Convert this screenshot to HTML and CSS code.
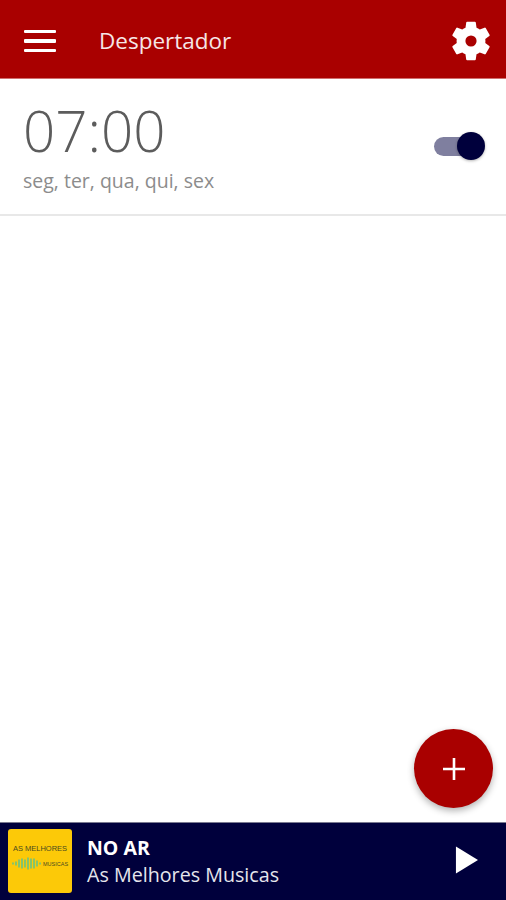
FILE: index.html
```html
<!DOCTYPE html>
<html lang="pt">
<head>
<meta charset="utf-8">
<title>Despertador</title>
<link rel="stylesheet" href="styles.css">
</head>
<body>
<div class="app">
  <header class="topbar">
    <div class="menu-icon"><span></span><span></span><span></span></div>
    <h1 class="title">Despertador</h1>
    <svg class="gear" viewBox="0 0 24 24" width="48" height="48"><path fill="#fff" fill-rule="evenodd" d="M19.14 12.94c.04-.3.06-.61.06-.94 0-.32-.02-.64-.07-.94l2.03-1.58a.49.49 0 0 0 .12-.61l-1.92-3.32a.49.49 0 0 0-.59-.22l-2.39.96c-.5-.38-1.03-.7-1.62-.94l-.36-2.54a.48.48 0 0 0-.48-.41h-3.84a.48.48 0 0 0-.47.41l-.36 2.54c-.59.24-1.13.57-1.62.94l-2.39-.96a.48.48 0 0 0-.59.22L2.74 8.87a.48.48 0 0 0 .12.61l2.03 1.58c-.05.3-.09.63-.09.94s.02.64.07.94l-2.03 1.58a.49.49 0 0 0-.12.61l1.92 3.32c.12.22.37.29.59.22l2.39-.96c.5.38 1.03.7 1.62.94l.36 2.54c.05.24.24.41.48.41h3.84c.24 0 .44-.17.47-.41l.36-2.54c.59-.24 1.13-.56 1.62-.94l2.39.96c.22.08.47 0 .59-.22l1.92-3.32a.48.48 0 0 0-.12-.61l-2.01-1.58zM12 14.8a2.8 2.8 0 1 1 0-5.6 2.8 2.8 0 0 1 0 5.6z"/></svg>
  </header>
  <main class="content">
    <section class="alarm">
      <div class="alarm-text">
        <div class="time">07:00</div>
        <div class="days">seg, ter, qua, qui, sex</div>
      </div>
      <div class="switch"><span class="track"></span><span class="thumb"></span></div>
    </section>
    <button class="fab" type="button" aria-label="Adicionar">
      <svg viewBox="0 0 24 24" width="24" height="24"><path fill="none" stroke="#fff" stroke-width="2.6" d="M12 1v22M1 12h22"/></svg>
    </button>
  </main>
  <footer class="player">
    <div class="cover">
      <div class="cover-top">AS MELHORES</div>
      <div class="cover-row">
        <svg viewBox="0 0 30 14" width="30" height="15"><path fill="none" stroke="#86c46a" stroke-width="2" d="M1 6v2M4 5v4M7 3v8M10 2v10M13 3v8M16 1v12M19 2v10M22 2v10M25 4v6M28 6v2"/></svg>
        <span class="cover-sub">MUSICAS</span>
      </div>
    </div>
    <div class="now">
      <div class="now-status">NO AR</div>
      <div class="now-name">As Melhores Musicas</div>
    </div>
    <svg class="play" viewBox="0 0 24 28" width="23" height="28"><path fill="#fff" d="M1 0l23 14L1 28z"/></svg>
  </footer>
</div>
</body>
</html>
```
FILE: styles.css
```css
* { box-sizing: border-box; }
html, body { margin: 0; padding: 0; }
body { font-family: "Open Sans", sans-serif; background: #fff; }
.app { width: 506px; height: 900px; display: flex; flex-direction: column; overflow: hidden; }

.topbar {
  height: 79px; flex: none; display: flex; align-items: center;
  background: #a90000; border-bottom: 1px solid #cf6f6f;
  padding: 4px 11px 0 24px;
}
.menu-icon { width: 32px; display: flex; flex-direction: column; gap: 6px; }
.menu-icon span { display: block; height: 3.6px; background: #fff; border-radius: 1px; }
.title {
  margin: 0 0 0 43px; flex: 1; color: #f6e6e6;
  font-size: 22.5px; font-weight: 400; line-height: 1;
}
.gear { flex: none; }

.content { flex: 1; position: relative; background: #fff; }
.alarm {
  height: 137px; display: flex; align-items: flex-start; justify-content: space-between;
  border-bottom: 2px solid #e8e8e8; padding: 17px 21px 0 23px;
}
.time { font-size: 56.5px; line-height: 70px; color: #5c5c5c; font-weight: 300; }
.days { font-size: 19.5px; line-height: 24px; color: #8c8c8c; margin-top: 3px; }
.switch { position: relative; width: 51px; height: 28px; margin-top: 36px; display: flex; align-items: center; }
.track { display: block; width: 48px; height: 19px; border-radius: 10px; background: #7f7f9f; }
.thumb {
  position: absolute; right: 0; top: 0; width: 28px; height: 28px; border-radius: 50%;
  background: #00003c; box-shadow: 0 1px 3px rgba(0,0,0,.3);
}

.fab {
  position: absolute; right: 13px; bottom: 14px; width: 79px; height: 79px;
  border: 0; border-radius: 50%; padding: 0; background: #a90000;
  display: flex; align-items: center; justify-content: center;
  box-shadow: 0 3px 7px rgba(0,0,0,.3);
}

.player {
  height: 78px; flex: none; display: flex; align-items: center;
  background: #00003c; border-top: 1px solid #7a7a90;
  padding: 0 28px 3px 8px;
}
.cover {
  width: 64px; height: 64px; flex: none; border-radius: 3px; background: #fcc908;
  display: flex; flex-direction: column; padding: 15px 3px 0; color: #4a4a20;
  position: relative; top: 1px;
}
.cover-top { font-family: "Liberation Sans", sans-serif; font-size: 7.5px; line-height: 9px; white-space: nowrap; text-align: center; }
.cover-row { display: flex; align-items: center; margin-top: 3px; gap: 1px; padding-left: 1px; }
.cover-sub { font-family: "Liberation Sans", sans-serif; font-size: 5.5px; }
.now { flex: 1; margin-left: 15px; color: #fff; position: relative; top: 1px; }
.now-status { font-size: 19.5px; font-weight: 700; line-height: 26px; }
.now-name { font-size: 19.7px; line-height: 27px; color: #e6e6ec; }
.play { flex: none; }
```
